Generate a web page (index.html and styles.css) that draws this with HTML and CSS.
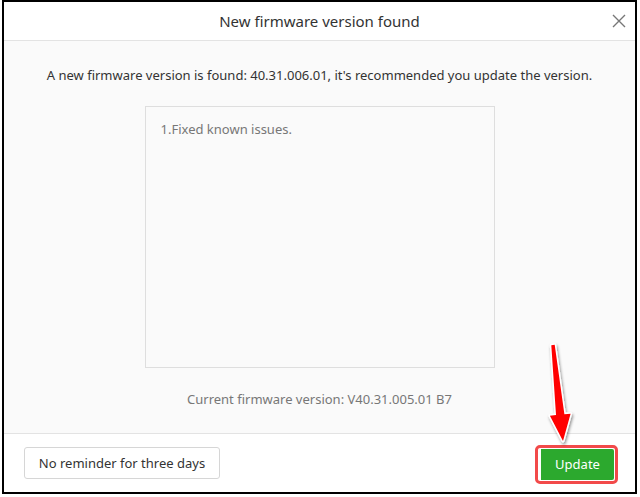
FILE: index.html
```html
<!DOCTYPE html>
<html>
<head>
<meta charset="utf-8">
<link rel="stylesheet" href="styles.css">
</head>
<body>
<div class="window">
  <div class="header">
    <div class="title">New firmware version found</div>
    <svg class="close" width="14" height="14" viewBox="0 0 14 14"><path d="M1 1L13 13M13 1L1 13" stroke="#777" stroke-width="1.4" fill="none"/></svg>
  </div>
  <div class="content">
    <p class="message">A new firmware version is found: 40.31.006.01, it's recommended you update the version.</p>
    <div class="notes">1.Fixed known issues.</div>
    <p class="current">Current firmware version: V40.31.005.01 B7</p>
  </div>
  <div class="footer">
    <button class="btn btn-plain">No reminder for three days</button>
    <div class="highlight"><button class="btn btn-update">Update</button></div>
  </div>
</div>
<svg class="arrow" width="40" height="115" viewBox="0 0 40 115">
  <defs><filter id="sh" x="-50%" y="-20%" width="200%" height="140%"><feDropShadow dx="1" dy="2" stdDeviation="1.6" flood-color="#000" flood-opacity="0.45"/></filter></defs>
  <polygon points="11.3,10.2 14.7,9.8 24.4,79.3 30.6,78.7 23,106 9.9,80.7 16,80.1" fill="#ff0000" stroke="#fff" stroke-width="3" stroke-linejoin="round" paint-order="stroke" filter="url(#sh)"/>
</svg>
</body>
</html>
```
FILE: styles.css
```css
html, body {
  margin: 0;
  padding: 0;
  background: #fff;
}
body {
  font-family: "Noto Sans", "Open Sans", sans-serif;
  color: #333;
  position: relative;
  width: 640px;
  height: 497px;
  overflow: hidden;
}
.window {
  box-sizing: border-box;
  margin-left: 2px;
  width: 635px;
  height: 494px;
  border: 2px solid #000;
  display: flex;
  flex-direction: column;
  background: #fff;
}
.header {
  height: 38px;
  border-bottom: 1px solid #e3e3e3;
  display: flex;
  align-items: center;
  justify-content: center;
  position: relative;
  flex: none;
}
.title {
  font-size: 15px;
  color: #333;
}
.close {
  position: absolute;
  right: 9px;
  top: 12px;
}
.content {
  flex: 1;
  background: #fafafa;
  display: flex;
  flex-direction: column;
  align-items: center;
}
.message {
  margin: 25px 0 0;
  font-size: 13px;
  line-height: 18px;
  color: #333;
}
.notes {
  box-sizing: border-box;
  margin-top: 22px;
  width: 350px;
  height: 262px;
  border: 1px solid #dedede;
  background: #fafafa;
  padding: 13px 15px;
  font-size: 13px;
  line-height: 18px;
  color: #777;
}
.current {
  margin: 22px 0 0;
  font-size: 13px;
  line-height: 18px;
  color: #777;
}
.footer {
  flex: none;
  height: 58px;
  border-top: 1px solid #e3e3e3;
  display: flex;
  align-items: center;
  justify-content: space-between;
  padding: 0 17px 0 20px;
}
.btn {
  font-family: inherit;
  font-size: 13px;
  height: 32px;
  border-radius: 3px;
  cursor: pointer;
}
.btn-plain {
  width: 196px;
  background: #fff;
  border: 1px solid #d6d6d6;
  color: #333;
}
.highlight {
  border: 3px solid #f24a4a;
  border-radius: 5px;
  padding: 1px 1px 1px 0;
  display: flex;
  margin-top: 2px;
}
.btn-update {
  width: 76px;
  height: 31px;
  background: #2ca92e;
  color: #fff;
  border: none;
  border-left: 3px solid #fff;
  border-radius: 2px;
  padding: 0;
}
.arrow {
  position: absolute;
  left: 540px;
  top: 335px;
}
```
